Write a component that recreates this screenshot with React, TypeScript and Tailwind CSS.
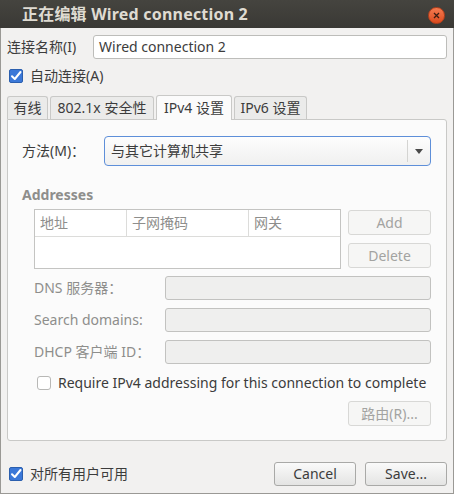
import React from "react";

const font = { fontFamily: '"Noto Sans", "Noto Sans CJK SC", sans-serif' };

function Check({ checked }: { checked: boolean }) {
  if (checked)
    return (
      <div className="w-[14px] h-[14px] rounded-[2px] bg-[#3b78d8] border border-[#2b5fae] flex items-center justify-center">
        <svg width="12" height="12" viewBox="0 0 12 12">
          <path d="M2 6.2 L4.8 9 L10.5 2" stroke="#fff" strokeWidth="2" fill="none" strokeLinecap="round" strokeLinejoin="round" />
        </svg>
      </div>
    );
  return <div className="w-[14px] h-[14px] rounded-[3px] bg-white border border-[#b8b8b6]" />;
}

function Btn({ children, disabled, className = "" }: { children: React.ReactNode; disabled?: boolean; className?: string }) {
  return (
    <div
      className={
        "flex items-center justify-center rounded-[3px] border text-[14px] " +
        (disabled
          ? "border-[#d8d8d6] bg-[#f6f6f5] text-[#a3a3a1] "
          : "border-[#a9a9a7] bg-gradient-to-b from-[#fafafa] to-[#e4e4e3] text-[#3c3c3c] ") +
        className
      }
    >
      {children}
    </div>
  );
}

export default function App() {
  return (
    <div style={font} className="w-[454px] h-[494px] flex flex-col bg-[#f2f1f0] text-[#3c3c3c] text-[14px] leading-none">
      {/* title bar */}
      <div className="h-[28px] flex items-center justify-between bg-gradient-to-b from-[#45443f] to-[#3a3935] pl-[22px] pr-[9px] shrink-0">
        <span className="text-[16px] font-bold text-[#dfdbd2] tracking-[0.2px]">正在编辑 Wired connection 2</span>
        <div className="w-[17px] h-[17px] rounded-full bg-gradient-to-b from-[#f37a4f] to-[#dc4a1c] border border-[#b8401b] flex items-center justify-center mt-[2px]">
          <svg width="7" height="7" viewBox="0 0 7 7">
            <path d="M1 1 L6 6 M6 1 L1 6" stroke="#3b1d12" strokeWidth="1.3" />
          </svg>
        </div>
      </div>
      {/* body */}
      <div className="flex-1 flex flex-col border-x border-b border-[#9a9995] px-[6px]">
        <div className="flex items-center mt-[7px] h-[24px]">
          <span className="w-[86px]">连接名称(I)</span>
          <div className="flex-1 h-[24px] rounded-[3px] border border-[#bdbdba] bg-white flex items-center pl-[5px]">
            Wired connection 2
          </div>
        </div>
        <div className="flex items-center mt-[10px] ml-[2px] gap-[7px] h-[14px]">
          <Check checked />
          <span>自动连接(A)</span>
        </div>
        {/* tabs */}
        <div className="flex items-end mt-[12px] h-[24px]">
          <div className="h-[23px] w-[41px] flex items-center justify-center rounded-t-[3px] border border-b-0 border-[#c9c9c7] bg-[#ebebea]">有线</div>
          <div className="h-[23px] w-[104px] ml-[2px] flex items-center justify-center rounded-t-[3px] border border-b-0 border-[#c9c9c7] bg-[#ebebea]">802.1x 安全性</div>
          <div className="h-[25px] w-[76px] ml-[2px] flex items-center justify-center rounded-t-[3px] border border-b-0 border-[#c9c9c7] bg-[#fbfbfb] relative top-[1px] z-10">IPv4 设置</div>
          <div className="h-[23px] w-[73px] ml-[2px] flex items-center justify-center rounded-t-[3px] border border-b-0 border-[#c9c9c7] bg-[#ebebea]">IPv6 设置</div>
        </div>
        {/* panel */}
        <div className="h-[322px] border border-[#c9c9c7] rounded-b-[3px] rounded-tr-[3px] bg-[#fbfbfb] flex flex-col pl-[14px] pr-[15px]">
          <div className="flex items-center mt-[16px] h-[30px]">
            <span className="w-[82px]">方法(M)：</span>
            <div className="flex-1 h-[30px] rounded-[4px] border border-[#5e8fd9] bg-gradient-to-b from-[#fdfdfd] to-[#f0f0ef] flex items-center">
              <span className="flex-1 pl-[6px]">与其它计算机共享</span>
              <div className="w-px h-[22px] bg-[#d4d4d2]" />
              <div className="w-[22px] flex items-center justify-center">
                <svg width="8" height="5" viewBox="0 0 8 5">
                  <path d="M0 0 L8 0 L4 5 Z" fill="#4a4a4a" />
                </svg>
              </div>
            </div>
          </div>
          <div className="mt-[22px] font-bold text-[#8e8e8c]">Addresses</div>
          <div className="flex mt-[7px] pl-[12px]">
            <div className="w-[308px] h-[60px] border border-[#c4c4c2] bg-white flex flex-col">
              <div className="flex h-[27px] border-b border-[#dcdcda] text-[#8e8e8c]">
                <div className="w-[92px] border-r border-[#dcdcda] flex items-center pl-[5px]">地址</div>
                <div className="w-[122px] border-r border-[#dcdcda] flex items-center pl-[5px]">子网掩码</div>
                <div className="flex-1 flex items-center pl-[5px]">网关</div>
              </div>
            </div>
            <div className="flex flex-col ml-[7px] gap-[8px] mt-[1px]">
              <Btn disabled className="w-[83px] h-[25px]">Add</Btn>
              <Btn disabled className="w-[83px] h-[25px]">Delete</Btn>
            </div>
          </div>
          <div className="flex flex-col gap-[8px] mt-[7px] pl-[12px] text-[#8e8e8c]">
            {["DNS 服务器：", "Search domains:", "DHCP 客户端 ID："].map((l) => (
              <div key={l} className="flex items-center h-[24px]">
                <span className="w-[131px]">{l}</span>
                <div className="flex-1 h-[24px] rounded-[3px] border border-[#c2c2c0] bg-[#efefee]" />
              </div>
            ))}
          </div>
          <div className="flex items-center mt-[12px] pl-[15px] gap-[7px] h-[14px]">
            <Check checked={false} />
            <span>Require IPv4 addressing for this connection to complete</span>
          </div>
          <div className="flex justify-end mt-[11px]">
            <Btn disabled className="w-[83px] h-[25px]">路由(R)...</Btn>
          </div>
        </div>
        {/* bottom */}
        <div className="flex items-center mt-[21px]">
          <div className="flex items-center ml-[2px] gap-[7px]">
            <Check checked />
            <span>对所有用户可用</span>
          </div>
          <div className="flex-1" />
          <Btn className="w-[82px] h-[24px]">Cancel</Btn>
          <Btn className="w-[82px] h-[24px] ml-[9px]">Save...</Btn>
        </div>
      </div>
    </div>
  );
}
